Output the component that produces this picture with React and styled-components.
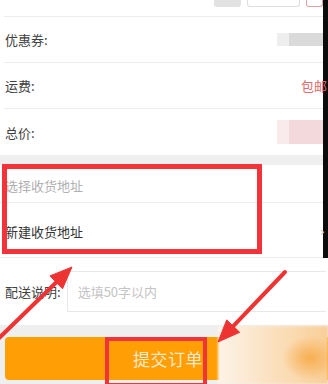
import styled, { createGlobalStyle } from "styled-components";

const GlobalStyle = createGlobalStyle`
  html, body { margin: 0; padding: 0; background: #fff; }
  body { font-family: "Noto Sans CJK SC", "Noto Sans", sans-serif; }
  * { box-sizing: border-box; }
`;

const Page = styled.div`
  position: relative;
  width: 328px;
  height: 384px;
  overflow: hidden;
  background: #fff;
  color: #3a3a3a;
`;

const Upper = styled.div`
  border-right: 5px solid #0c0c0c;
`;

const StepperRow = styled.div`
  height: 17px;
  margin-left: 4px;
  border-bottom: 1px solid #ececec;
  display: flex;
  align-items: flex-start;
  justify-content: flex-end;
  gap: 6px;
  padding-top: 0;
`;

const StepBtn = styled.div`
  width: ${(p) => p.w}px;
  height: 7px;
  margin-right: ${(p) => p.mr || 0}px;
  border-radius: 0 0 3px 3px;
  background: ${(p) => p.bg || "#fff"};
  border: 1px solid ${(p) => p.line || "transparent"};
  border-top: none;
`;

const InfoRow = styled.div`
  height: ${(p) => p.h}px;
  margin-left: 4px;
  padding-left: 1px;
  border-bottom: ${(p) => (p.last ? "none" : "1px solid #ececec")};
  display: flex;
  align-items: center;
  justify-content: space-between;
  font-size: 13px;
`;

const Label = styled.span`
  color: ${(p) => p.color || "#404040"};
`;

const Blur = styled.div`
  display: flex;
  height: ${(p) => p.h}px;
  filter: blur(0.6px);
`;

const BlurPart = styled.div`
  width: ${(p) => p.w}px;
  background: ${(p) => p.bg};
`;

const FreeShip = styled.span`
  color: #de6a6a;
  font-size: 13px;
  white-space: nowrap;
  margin-right: -4px;
`;

const Band = styled.div`
  height: ${(p) => p.h}px;
  background: #efefef;
`;

const AddressRow = styled.div`
  height: ${(p) => p.h}px;
  padding-left: 5px;
  padding-top: ${(p) => p.pt || 0}px;
  border-bottom: 1px solid #ececec;
  display: flex;
  align-items: center;
  justify-content: space-between;
  font-size: 13px;
  color: ${(p) => p.color};
`;

const Chevron = styled.span`
  color: #cfcfcf;
  font-size: 13px;
  margin-right: -2px;
  font-family: "DejaVu Sans", sans-serif;
`;

const NoteRow = styled.div`
  height: 67px;
  display: flex;
  align-items: center;
  padding-left: 5px;
  gap: 6px;
  font-size: 13px;
`;

const NoteInput = styled.div`
  flex: 1;
  height: 41px;
  margin-right: 2px;
  border: 1px solid #e8e8e8;
  border-right: none;
  display: flex;
  align-items: center;
  padding-left: 10px;
  color: #c4c4c4;
  font-size: 13px;
`;

const Footer = styled.div`
  height: 60px;
  background: #efefef;
  padding: 12px 0 0 5px;
`;

const SubmitButton = styled.div`
  height: 43px;
  width: 340px;
  background: #ff9e05;
  border-radius: 4px;
  display: flex;
  align-items: center;
  padding-left: 128px;
  color: #fde9c9;
  font-size: 17px;
  letter-spacing: 0.5px;
`;

const MarkBox = styled.div`
  position: absolute;
  left: ${(p) => p.x}px;
  top: ${(p) => p.y}px;
  width: ${(p) => p.w}px;
  height: ${(p) => p.h}px;
  border: ${(p) => p.b}px solid #f2333a;
  pointer-events: none;
`;

const Arrows = styled.svg`
  position: absolute;
  left: 0;
  top: 0;
  pointer-events: none;
`;

const Watermark = styled.div`
  position: absolute;
  left: 218px;
  top: 326px;
  width: 110px;
  height: 58px;
  background:
    radial-gradient(ellipse 28px 22px at 92px 32px, rgba(247, 170, 70, 0.9), rgba(247, 170, 70, 0) 100%),
    linear-gradient(90deg, #fdf3e8 0%, #fbe2c2 45%, #f9cf98 100%);
  filter: blur(1px);
`;

function Arrow({ x1, y1, x2, y2 }) {
  const dx = x2 - x1;
  const dy = y2 - y1;
  const len = Math.hypot(dx, dy);
  const ux = dx / len;
  const uy = dy / len;
  const hl = 22;
  const hw = 9;
  const bx = x2 - ux * hl;
  const by = y2 - uy * hl;
  const px = -uy;
  const py = ux;
  const pts = `${x2},${y2} ${bx + px * hw},${by + py * hw} ${bx - px * hw},${by - py * hw}`;
  return (
    <g fill="#ee3333" stroke="#ee3333">
      <line x1={x1} y1={y1} x2={bx + ux * 2} y2={by + uy * 2} strokeWidth="4" strokeLinecap="round" />
      <polygon points={pts} strokeWidth="1" strokeLinejoin="round" />
    </g>
  );
}

export default function App() {
  return (
    <>
      <GlobalStyle />
      <Page>
        <Upper>
          <StepperRow>
            <StepBtn w={27} bg="#e2e2e2" />
            <StepBtn w={53} line="#dedede" />
            <StepBtn w={17} line="#dba3a3" />
          </StepperRow>
          <InfoRow h={46}>
            <Label>优惠券:</Label>
            <Blur h={13}>
              <BlurPart w={12} bg="#eeeeee" />
              <BlurPart w={34} bg="#dadada" />
            </Blur>
          </InfoRow>
          <InfoRow h={46}>
            <Label>运费:</Label>
            <FreeShip>包邮</FreeShip>
          </InfoRow>
          <InfoRow h={46} last>
            <Label>总价:</Label>
            <Blur h={24}>
              <BlurPart w={12} bg="#f9eaec" />
              <BlurPart w={34} bg="#f3d9dc" />
            </Blur>
          </InfoRow>
          <Band h={10} />
          <AddressRow h={38} pt={3} color="#b0b0b0">
            选择收货地址
          </AddressRow>
          <AddressRow h={55} pt={3} color="#333">
            新建收货地址
            <Chevron>›</Chevron>
          </AddressRow>
        </Upper>
        <NoteRow>
          <Label>配送说明:</Label>
          <NoteInput>选填50字以内</NoteInput>
        </NoteRow>
        <Footer>
          <SubmitButton>提交订单</SubmitButton>
        </Footer>

        <MarkBox x={2} y={164} w={260} h={90} b={5} />
        <MarkBox x={105} y={337} w={102} h={50} b={4} />
        <Watermark />
        <Arrows width="328" height="384" viewBox="0 0 328 384">
          <Arrow x1={-4} y1={341} x2={72} y2={267} />
          <Arrow x1={285} y1={272} x2={218} y2={342} />
        </Arrows>
      </Page>
    </>
  );
}
